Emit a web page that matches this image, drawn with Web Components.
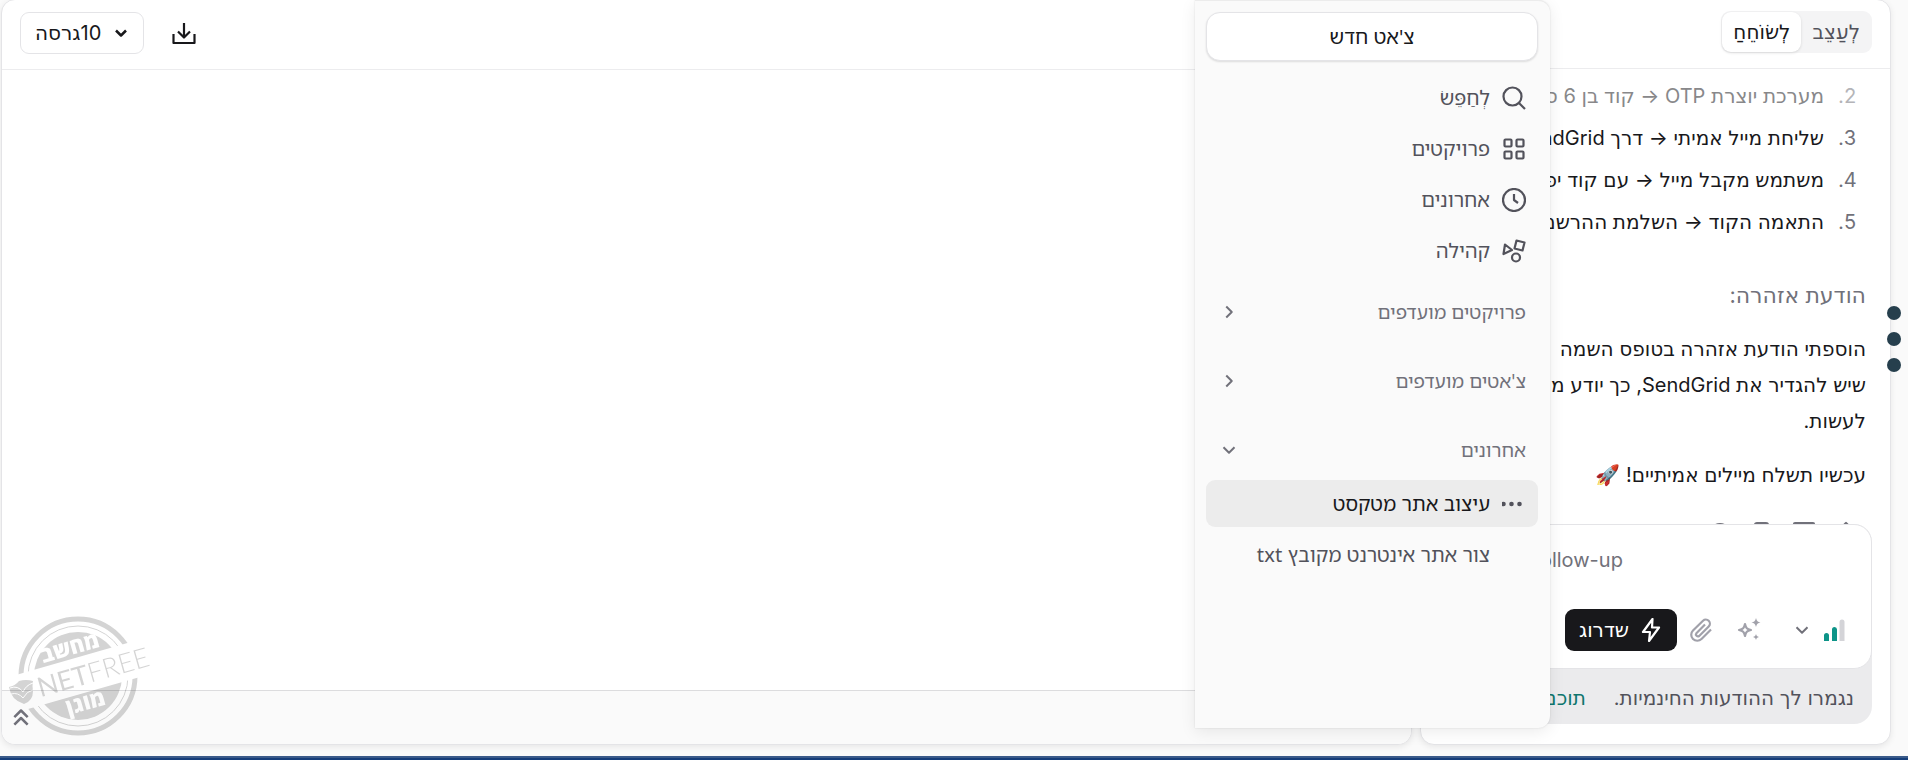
<!DOCTYPE html>
<html lang="he" dir="rtl">
<head>
<meta charset="utf-8">
<title>צ'אט</title>
<style>
    html, body {
        margin: 0;
        height: 100%;
    }

    body {
        background: #fafafa;
        color: #18181b;
        font: 20px/36px Inter, "DejaVu Sans", sans-serif;
        overflow: hidden;
    }
</style>
</head>
<body>
<app-shell>
    <chat-panel></chat-panel>
    <preview-panel></preview-panel>
    <side-menu slot="menu"></side-menu>
</app-shell>

<script>
const ICONS = {
    search: '<circle cx="10.500" cy="10.500" r="9"/><path d="M17 17l6 6"/>',
    grid: '<rect x="2.500" y="2.500" width="7" height="7" rx="1"/><rect x="14.500" y="2.500" width="7" height="7" rx="1"/><rect x="2.500" y="14.500" width="7" height="7" rx="1"/><rect x="14.500" y="14.500" width="7" height="7" rx="1"/>',
    clock: '<circle cx="12" cy="12" r="11"/><path d="M12 6v6l4 3"/>',
    shapes: '<path d="M3 5.500L10 11l-8.500 4zM14.500 1.500l8 2-2 8-8-2z"/><circle cx="14" cy="18.500" r="4"/>',
    down: '<path d="M6 9l6 6 6-6"/>',
    next: '<path d="M9 6l6 6-6 6"/>',
    up: '<path d="M4 11l8-8 8 8M4 20l8-8 8 8"/>',
    dots: '<g fill="currentColor" stroke="none"><circle cx="1.500" cy="12" r="2.300"/><circle cx="9.500" cy="12" r="2.300"/><circle cx="17.500" cy="12" r="2.300"/></g>',
    download: '<path d="M12 2v14M6 10.500l6 6 6-6M1.500 13v9h21v-9"/>',
    bolt: '<path d="M13.500 1L4 14h7l-1 9L20 9.500h-7z"/>',
    clip: '<path d="M22 11.500l-9.500 9.500a6 6 0 0 1-8.500-8.500L14 2.800a4 4 0 0 1 5.700 5.700L10.200 18a2 2 0 0 1-2.800-2.800L16 6.500"/>',
    sparkles: '<path d="M8 6c.8 4 2 5.200 6 6-4 .8-5.200 2-6 6-.8-4-2-5.200-6-6 4-.8 5.200-2 6-6z"/><path fill="currentColor" stroke="none" d="M19 0c.8 3 1.700 4 4.500 4.500C20.700 5 19.800 6 19 9c-.8-3-1.700-4-4.500-4.500C17.300 4 18.200 3 19 0zM19 16c.6 2 1 2.500 3 3-2 .5-2.400 1-3 3-.6-2-1-2.500-3-3 2-.5 2.400-1 3-3z"/>',
    bars: '<g stroke="none"><path fill="#0d9488" d="M1 23v-5.500a2.500 2.500 0 0 1 5 0V23zM9 23V11.500a2.500 2.500 0 0 1 5 0V23z"/><path fill="#d4d4d8" d="M16.500 23V4a2.500 2.500 0 0 1 5 0v19z"/></g>',
    pen: '<path d="M12 2L22 12v10H2V12z"/>',
    note: '<rect x="2" y="2" width="20" height="18" rx="1"/>',
    copy: '<rect x="5" y="2" width="13" height="18" rx="2"/>',
    round: '<circle cx="12" cy="12" r="9"/>'
};

class UiIcon extends HTMLElement {
    connectedCallback() {
        const size = this.getAttribute("size") || 24;
        this.attachShadow({ mode: "open" }).innerHTML = `
            <style>
                :host {
                    display: inline-flex;
                    flex: none;
                }

                svg {
                    fill: none;
                    stroke: currentColor;
                    stroke-width: ${this.getAttribute("weight") || 2.2};
                    stroke-linejoin: round;
                }
            </style>
            <svg width="${size}" height="${size}" viewBox="0 0 24 24" aria-hidden="true">${ICONS[this.getAttribute("name")]}</svg>
        `;
    }
}

class MenuItem extends HTMLElement {
    connectedCallback() {
        const icon = this.getAttribute("icon");
        this.attachShadow({ mode: "open" }).innerHTML = `
            <style>
                :host {
                    display: block;
                }

                a {
                    display: flex;
                    align-items: center;
                    gap: 12px;
                    height: 47px;
                    padding: 0 12px;
                    border-radius: 9px;
                    color: #52525b;
                    font-size: 20px;
                    line-height: 28px;
                    text-decoration: none;
                }

                .icon {
                    display: flex;
                    width: 24px;
                    justify-content: center;
                }

                :host([active]) a {
                    background: #ececec;
                    color: #18181b;
                }

                :host([active]) .icon {
                    color: #52525b;
                }
            </style>
            <a href="#">
                <span class="icon">${icon ? `<ui-icon name="${icon}"></ui-icon>` : ""}</span>
                <slot></slot>
            </a>
        `;
    }
}

class MenuSection extends HTMLElement {
    connectedCallback() {
        this.attachShadow({ mode: "open" }).innerHTML = `
            <style>
                :host {
                    display: block;
                }

                button {
                    display: flex;
                    align-items: center;
                    justify-content: space-between;
                    width: 100%;
                    height: 34px;
                    padding: 0 12px;
                    border: 0;
                    background: none;
                    color: #71717a;
                    font: inherit;
                    font-size: 19px;
                }
            </style>
            <button><slot></slot><ui-icon name="${this.hasAttribute("open") ? "down" : "next"}" size="22"></ui-icon></button>
        `;
    }
}

class SideMenu extends HTMLElement {
    connectedCallback() {
        this.attachShadow({ mode: "open" }).innerHTML = `
            <style>
                :host {
                    display: flex;
                    flex-direction: column;
                    box-sizing: border-box;
                    padding: 11px 12px 0 11px;
                    border-top: 1px solid #ececec;
                    border-radius: 0 12px 12px 0;
                    background: #fafafa;
                    box-shadow: 0 4px 16px rgba(0, 0, 0, .08), 0 0 2px rgba(0, 0, 0, .12);
                    font-family: "Noto Sans Hebrew", "Open Sans", sans-serif;
                }

                .new {
                    height: 49px;
                    border: 1px solid #e4e4e7;
                    border-radius: 14px;
                    background: #fff;
                    box-shadow: 0 1px 2px rgba(0, 0, 0, .12);
                    color: #18181b;
                    font: inherit;
                    font-size: 20px;
                }

                nav, .recent {
                    display: grid;
                    gap: 4px;
                }

                nav {
                    margin: 13px 0 21px;
                }

                .sections {
                    display: grid;
                    gap: 35px;
                    margin-bottom: 13px;
                }
            </style>
            <button class="new">צ'אט חדש</button>
            <nav>
                <menu-item icon="search">לְחַפֵּשׂ</menu-item>
                <menu-item icon="grid">פרויקטים</menu-item>
                <menu-item icon="clock">אחרונים</menu-item>
                <menu-item icon="shapes">קהילה</menu-item>
            </nav>
            <div class="sections">
                <menu-section>פרויקטים מועדפים</menu-section>
                <menu-section>צ'אטים מועדפים</menu-section>
                <menu-section open>אחרונים</menu-section>
            </div>
            <div class="recent">
                <menu-item icon="dots" active>עיצוב אתר מטקסט</menu-item>
                <menu-item>צור אתר אינטרנט מקובץ txt</menu-item>
            </div>
        `;
    }
}

class ChatComposer extends HTMLElement {
    connectedCallback() {
        this.attachShadow({ mode: "open" }).innerHTML = `
            <style>
                :host {
                    display: block;
                    border-radius: 18px;
                    background: #ebebed;
                }

                form {
                    display: flex;
                    flex-direction: column;
                    justify-content: space-between;
                    box-sizing: border-box;
                    height: 145px;
                    padding: 17px 24px 17px 18px;
                    border: 1px solid #e4e4e7;
                    border-radius: 18px;
                    background: #fff;
                }

                textarea {
                    height: 36px;
                    padding: 0;
                    border: 0;
                    outline: 0;
                    resize: none;
                    background: none;
                    font: inherit;
                    text-align: left;
                    overflow: hidden;
                }

                textarea::placeholder {
                    color: #71717a;
                }

                .tools {
                    display: flex;
                    align-items: center;
                    color: #a1a1aa;
                }

                button {
                    display: flex;
                    align-items: center;
                    justify-content: center;
                    height: 42px;
                    padding: 0;
                    border: 0;
                    background: none;
                    color: inherit;
                    font: inherit;
                }

                .model {
                    gap: 10px;
                    margin-left: 18px;
                    color: #71717a;
                }

                .tool {
                    width: 48px;
                }

                .upgrade {
                    gap: 10px;
                    padding: 0 14px;
                    border-radius: 9px;
                    background: #18181b;
                    color: #fff;
                }

                .notice {
                    display: flex;
                    gap: 28px;
                    padding: 11px 18px 8px;
                    color: #52525b;
                    white-space: nowrap;
                    overflow: hidden;
                }

                .notice a {
                    color: #0f766e;
                    text-decoration: none;
                }
            </style>
            <form>
                <textarea aria-label="הודעה" placeholder="Ask a follow-up…"></textarea>
                <div class="tools">
                    <button type="button" class="model" aria-label="מודל"><ui-icon name="bars"></ui-icon><ui-icon name="down" size="22"></ui-icon></button>
                    <button type="button" class="tool" aria-label="שיפור"><ui-icon name="sparkles"></ui-icon></button>
                    <button type="button" class="tool" aria-label="צירוף קובץ"><ui-icon name="clip"></ui-icon></button>
                    <button type="button" class="upgrade"><ui-icon name="bolt"></ui-icon>שדרוג</button>
                </div>
            </form>
            <div class="notice"><span>נגמרו לך ההודעות החינמיות.</span><a href="#">תוכנית</a></div>
        `;
    }
}

class ChatPanel extends HTMLElement {
    connectedCallback() {
        this.attachShadow({ mode: "open" }).innerHTML = `
            <style>
                :host {
                    display: flex;
                    flex-direction: column;
                    box-sizing: border-box;
                    min-height: 0;
                    border: 1px solid #e4e4e7;
                    border-radius: 14px;
                    background: #fff;
                    box-shadow: 0 2px 6px rgba(0, 0, 0, .08);
                    overflow: hidden;
                }

                header {
                    display: flex;
                    align-items: center;
                    box-sizing: border-box;
                    flex: none;
                    height: 69px;
                    padding: 0 18px 4px;
                    border-bottom: 1px solid #ececee;
                }

                .tabs {
                    display: flex;
                    box-sizing: border-box;
                    height: 42px;
                    padding: 1px;
                    border-radius: 9px;
                    background: #f4f4f5;
                }

                .tabs button {
                    padding: 0 11px;
                    border: 0;
                    border-radius: 9px;
                    background: none;
                    color: #52525b;
                    font: inherit;
                    line-height: 36px;
                }

                .tabs .on {
                    background: #fff;
                    box-shadow: 0 1px 3px rgba(0, 0, 0, .12);
                    color: #18181b;
                }

                main {
                    flex: 1;
                    min-height: 0;
                    padding: 9px 24px 0 18px;
                    overflow: hidden;
                }

                ol {
                    margin: 0 0 37px;
                    padding-right: 33px;
                }

                li {
                    margin-bottom: 6px;
                    padding-right: 9px;
                    white-space: nowrap;
                }

                li::marker {
                    color: #71717a;
                }

                li:first-child {
                    color: #88888a;
                }

                li:first-child::marker {
                    color: #b4b4b8;
                }

                li:last-child {
                    margin: 0;
                }

                h3 {
                    margin: 0 0 18px;
                    color: #71717a;
                    font-size: 22px;
                    font-weight: 400;
                }

                p {
                    margin: 0 0 18px;
                    white-space: nowrap;
                }

                .actions {
                    display: flex;
                    gap: 18px;
                    padding: 10px 8px 0;
                    color: #71717a;
                }

                chat-composer {
                    flex: none;
                    margin: 0 18px 20px;
                }
            </style>
            <header>
                <div class="tabs">
                    <button>לְעַצֵב</button>
                    <button class="on">לְשׂוֹחֵחַ</button>
                </div>
            </header>
            <main>
                <ol start="2">
                    <li>מערכת יוצרת OTP → קוד בן 6 ספרות</li>
                    <li>שליחת מייל אמיתי → דרך SendGrid</li>
                    <li>משתמש מקבל מייל → עם קוד יפה</li>
                    <li>התאמה הקוד → השלמת ההרשמה</li>
                </ol>
                <h3>הודעת אזהרה:</h3>
                <p>הוספתי הודעת אזהרה בטופס השמה<br>שיש להגדיר את SendGrid, כך יודע מה<br>לעשות.</p>
                <p>עכשיו תשלח מיילים אמיתיים! 🚀</p>
                <div class="actions">
                    <ui-icon name="pen"></ui-icon>
                    <ui-icon name="note"></ui-icon>
                    <ui-icon name="copy"></ui-icon>
                    <ui-icon name="round"></ui-icon>
                </div>
            </main>
            <chat-composer></chat-composer>
        `;
    }
}

class NetfreeStamp extends HTMLElement {
    connectedCallback() {
        this.attachShadow({ mode: "open" }).innerHTML = `
            <style>
                :host {
                    display: block;
                }

                svg {
                    display: block;
                    overflow: visible;
                    opacity: .17;
                }
            </style>
            <svg width="160" height="124" viewBox="6 614 160 124" direction="ltr" role="img" aria-label="NETFREE">
                <defs>
                    <mask id="band" maskUnits="userSpaceOnUse" x="0" y="600" width="160" height="150">
                        <rect x="0" y="600" width="160" height="150" fill="#fff"/>
                        <rect x="0" y="658" width="160" height="36" transform="rotate(-16 78 676)" fill="#000"/>
                    </mask>
                </defs>
                <g mask="url(#band)">
                    <circle cx="78" cy="676" r="57" fill="none" stroke="#000" stroke-width="5"/>
                    <circle cx="78" cy="676" r="50" fill="none" stroke="#000" stroke-width="1"/>
                    <circle cx="78" cy="676" r="44"/>
                </g>
                <g transform="rotate(-16 78 676)">
                    <g fill="#fff" font-family="'Open Sans', sans-serif" font-weight="800" font-size="22" text-anchor="middle">
                        <text x="78" y="654">מחשב</text>
                        <text x="78" y="711">מוגן</text>
                    </g>
                    <text x="36" y="686" font-family="Lato, sans-serif" font-size="27">NET<tspan font-weight="300">FREE</tspan></text>
                </g>
                <path d="M9 687q6-1 10-6 7-2 14 0-1 5 0 10 0 10-9 13-13-4-15-17z"/>
                <path d="M10 688q8-3 13 4 3-7 10-9M11 694q7-2 12 4 4-7 10-8" fill="none" stroke="#fff" stroke-width="1"/>
            </svg>
        `;
    }
}

class PreviewPanel extends HTMLElement {
    connectedCallback() {
        this.attachShadow({ mode: "open" }).innerHTML = `
            <style>
                :host {
                    position: relative;
                    display: flex;
                    flex-direction: column;
                    box-sizing: border-box;
                    border: 1px solid #e4e4e7;
                    border-radius: 14px;
                    background: #fff;
                    box-shadow: 0 2px 6px rgba(0, 0, 0, .08);
                    overflow: hidden;
                }

                header {
                    display: flex;
                    flex-direction: row-reverse;
                    align-items: center;
                    gap: 28px;
                    box-sizing: border-box;
                    height: 70px;
                    padding: 0 18px 4px;
                    border-bottom: 1px solid #ececee;
                }

                button {
                    display: flex;
                    align-items: center;
                    padding: 0;
                    border: 0;
                    background: none;
                    color: #18181b;
                    font: inherit;
                }

                header .version {
                    gap: 10px;
                    height: 42px;
                    padding: 0 12px 0 14px;
                    border: 1px solid #e4e4e7;
                    border-radius: 9px;
                }

                .page {
                    flex: 1;
                }

                footer {
                    display: flex;
                    flex-direction: row-reverse;
                    align-items: center;
                    box-sizing: border-box;
                    height: 54px;
                    padding: 0 9px;
                    border-top: 1px solid #dcdcde;
                    background: #fafafa;
                }

                footer button {
                    color: #71717a;
                }

                /* the stamp floats over the page and the footer */
                netfree-stamp {
                    position: absolute;
                    left: 4px;
                    bottom: 6px;
                    pointer-events: none;
                }
            </style>
            <header>
                <button class="version"><ui-icon name="down" size="20" weight="3"></ui-icon>10גרסה</button>
                <button aria-label="הורדה"><ui-icon name="download"></ui-icon></button>
            </header>
            <div class="page"></div>
            <footer><button aria-label="פתיחה"><ui-icon name="up" size="20" weight="3"></ui-icon></button></footer>
            <netfree-stamp></netfree-stamp>
        `;
    }
}

class AppShell extends HTMLElement {
    connectedCallback() {
        this.attachShadow({ mode: "open" }).innerHTML = `
            <style>
                :host {
                    position: relative;
                    display: flex;
                    flex-direction: column;
                    height: 100%;
                }

                .panels {
                    display: grid;
                    grid-template-columns: 471px 1fr;
                    grid-template-rows: minmax(0, 1fr);
                    gap: 8px;
                    flex: 1;
                    min-height: 0;
                    margin: -1px 17px 11px 1px;
                }

                .bar {
                    flex: none;
                    height: 2px;
                    border-top: 2px solid #3b5b8a;
                    background: #163e7a;
                }

                /* the open menu lies over both panels */
                ::slotted([slot="menu"]) {
                    position: absolute;
                    top: 0;
                    right: 358px;
                    bottom: 32px;
                    width: 355px;
                }

                .handle {
                    position: absolute;
                    top: 306px;
                    right: 7px;
                    display: grid;
                    gap: 12px;
                    padding: 0;
                    border: 0;
                    background: none;
                }

                .handle i {
                    width: 14px;
                    height: 14px;
                    border-radius: 50%;
                    background: #263f4d;
                }
            </style>
            <div class="panels"><slot></slot></div>
            <div class="bar"></div>
            <slot name="menu"></slot>
            <button class="handle" aria-label="אפשרויות"><i></i><i></i><i></i></button>
        `;
    }
}

customElements.define("ui-icon", UiIcon);
customElements.define("menu-item", MenuItem);
customElements.define("menu-section", MenuSection);
customElements.define("side-menu", SideMenu);
customElements.define("chat-composer", ChatComposer);
customElements.define("chat-panel", ChatPanel);
customElements.define("netfree-stamp", NetfreeStamp);
customElements.define("preview-panel", PreviewPanel);
customElements.define("app-shell", AppShell);
</script>
</body>
</html>
